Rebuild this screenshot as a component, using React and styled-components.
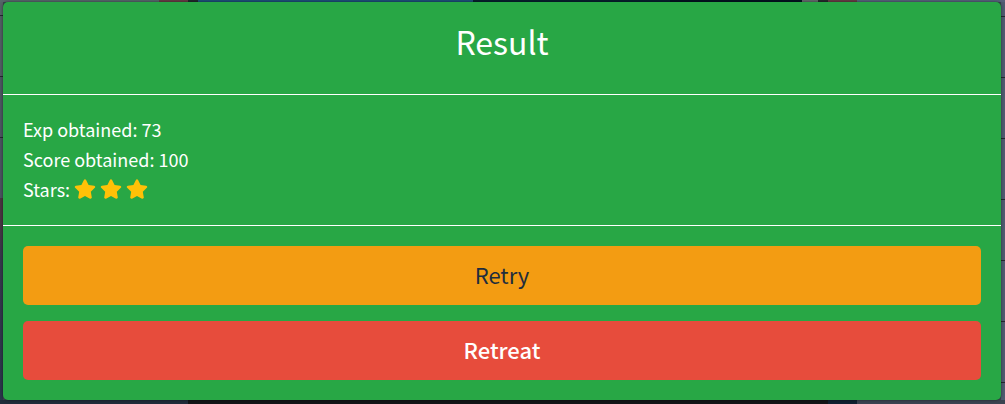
import React from "react";
import styled, { createGlobalStyle } from "styled-components";
import { FaStar } from "react-icons/fa";

const GlobalStyle = createGlobalStyle`
  * { box-sizing: border-box; }
  body {
    margin: 0;
    font-family: "Noto Sans CJK SC", "Open Sans", sans-serif;
  }
`;

const Backdrop = styled.main`
  min-height: 100vh;
  padding: 2px 4px 4px 3px;
  background:
    linear-gradient(90deg, #56666a 159px, #663c44 159px 188px, #20282b 188px 198px, #1c5078 198px 473px, #07202d 473px 670px, #031320 670px 802px, #62696b 802px 818px, #252a2c 818px 828px, #663c44 828px 857px, #56617a 857px) top / 100% 2px no-repeat,
    linear-gradient(90deg, #202c3a 188px, #131517 188px 828px, #102130 828px 857px, #3b4451 857px) bottom / 100% 4px no-repeat,
    repeating-linear-gradient(#4f5b70 0 16px, #24272f 16px 17px, #4f5b70 17px 61px) right / 4px 100% no-repeat,
    linear-gradient(#536366 15px, #24272f 15px 16px, #505d62 16px 76px, #24272f 76px 77px, #4b5660 77px 137px, #24272f 137px 138px, #4a535f 138px 198px, #493541 198px 218px, #35384c 260px, #29364a) left / 3px 100% no-repeat,
    #3b4550;
`;

const Dialog = styled.section`
  border-radius: 5px;
  background: #28a745;
  color: #fff;
  box-shadow: 0 0 3px rgba(0, 0, 0, 0.5);
`;

const Header = styled.header`
  padding: 17px 20px 31px;
  border-bottom: 1px solid #fff;
  text-align: center;
`;

const Title = styled.h1`
  margin: 0;
  font-size: 32px;
  font-weight: 400;
  line-height: 44px;
`;

const Summary = styled.div`
  padding: 19px 20px 21px;
  border-bottom: 1px solid #fff;
  font-size: 18px;
  font-weight: 400;
  line-height: 30px;
`;

const Line = styled.p`
  display: flex;
  align-items: center;
  gap: 4px;
  margin: 0;
`;

const Stars = styled.span`
  display: flex;
  gap: 4px;
`;

const Star = styled(FaStar)`
  width: 22px;
  height: 20px;
  color: #ffc107;
`;

const Actions = styled.div`
  display: grid;
  gap: 16px;
  padding: 20px;
`;

const Button = styled.button`
  width: 100%;
  height: 59px;
  padding: 0 0 4px;
  border: 0;
  border-radius: 5px;
  background: ${({ $danger }) => ($danger ? "#e74c3c" : "#f39c12")};
  color: ${({ $danger }) => ($danger ? "#fff" : "#1f2d3d")};
  font-family: inherit;
  font-size: 22px;
  font-weight: ${({ $danger }) => ($danger ? 500 : 400)};
  line-height: 36px;
  cursor: pointer;
`;

export default function App() {
  return (
    <>
      <GlobalStyle />
      <Backdrop>
        <Dialog role="dialog" aria-labelledby="result-title">
          <Header>
            <Title id="result-title">Result</Title>
          </Header>
          <Summary>
            <Line>Exp obtained: 73</Line>
            <Line>Score obtained: 100</Line>
            <Line>
              Stars:
              <Stars role="img" aria-label="3 stars">
                <Star />
                <Star />
                <Star />
              </Stars>
            </Line>
          </Summary>
          <Actions>
            <Button type="button">Retry</Button>
            <Button type="button" $danger>Retreat</Button>
          </Actions>
        </Dialog>
      </Backdrop>
    </>
  );
}
